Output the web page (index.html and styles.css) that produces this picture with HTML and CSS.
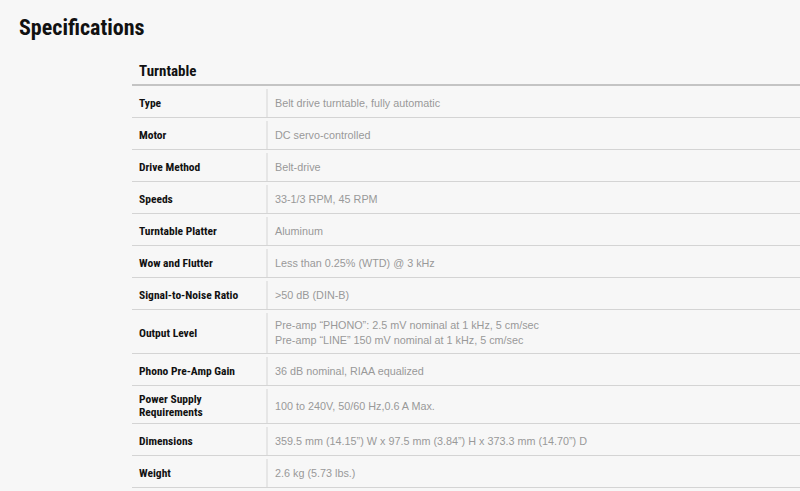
FILE: index.html
```html
<!DOCTYPE html>
<html lang="en">
<head>
    <meta charset="UTF-8">
    <meta name="viewport" content="width=device-width, initial-scale=1.0">
    <title>Specifications</title>
    <link rel="stylesheet" href="styles.css">
</head>
<body>
    <h1 class="page-title">Specifications</h1>

    <section class="spec-group">
        <h2 class="group-title">Turntable</h2>

        <div class="spec-row">
            <div class="spec-label">Type</div>
            <div class="spec-value">Belt drive turntable, fully automatic</div>
        </div>
        <div class="spec-row">
            <div class="spec-label">Motor</div>
            <div class="spec-value">DC servo-controlled</div>
        </div>
        <div class="spec-row">
            <div class="spec-label">Drive Method</div>
            <div class="spec-value">Belt-drive</div>
        </div>
        <div class="spec-row">
            <div class="spec-label">Speeds</div>
            <div class="spec-value">33-1/3 RPM, 45 RPM</div>
        </div>
        <div class="spec-row">
            <div class="spec-label">Turntable Platter</div>
            <div class="spec-value">Aluminum</div>
        </div>
        <div class="spec-row">
            <div class="spec-label">Wow and Flutter</div>
            <div class="spec-value">Less than 0.25% (WTD) @ 3 kHz</div>
        </div>
        <div class="spec-row">
            <div class="spec-label">Signal-to-Noise Ratio</div>
            <div class="spec-value">&gt;50 dB (DIN-B)</div>
        </div>
        <div class="spec-row">
            <div class="spec-label">Output Level</div>
            <div class="spec-value">Pre-amp “PHONO”: 2.5 mV nominal at 1 kHz, 5 cm/sec<br>Pre-amp “LINE” 150 mV nominal at 1 kHz, 5 cm/sec</div>
        </div>
        <div class="spec-row">
            <div class="spec-label">Phono Pre-Amp Gain</div>
            <div class="spec-value">36 dB nominal, RIAA equalized</div>
        </div>
        <div class="spec-row">
            <div class="spec-label">Power Supply<br>Requirements</div>
            <div class="spec-value">100 to 240V, 50/60 Hz,0.6 A Max.</div>
        </div>
        <div class="spec-row">
            <div class="spec-label">Dimensions</div>
            <div class="spec-value">359.5 mm (14.15”) W x 97.5 mm (3.84”) H x 373.3 mm (14.70”) D</div>
        </div>
        <div class="spec-row">
            <div class="spec-label">Weight</div>
            <div class="spec-value">2.6 kg (5.73 lbs.)</div>
        </div>
    </section>
</body>
</html>
```

FILE: styles.css
```css
body {
    margin: 0;
    padding: 15px 0 0 19px;
    background: #f7f7f7;
    color: #111;
    font-family: "Liberation Sans Narrow", "Roboto Condensed", "Liberation Sans", Arial, sans-serif;
}

.page-title {
    margin: 0;
    font-size: 22px;
    font-weight: bold;
    line-height: 26px;
}

.spec-group {
    margin: 20px 0 0 113px;
}

.group-title {
    margin: 0;
    padding: 0 0 3px 7px;
    font-size: 15px;
    font-weight: bold;
    line-height: 20px;
    border-bottom: 2px solid #c4c4c4;
}

/* Rows */
.spec-row {
    display: grid;
    grid-template-columns: 134px 1fr;
    min-height: 32px;
    box-sizing: border-box;
    padding-top: 3px;
    border-bottom: 1px solid #d4d4d4;
}

.spec-label {
    padding: 4px 7px;
    font-size: 11.5px;
    font-weight: bold;
    line-height: 13px;
    display: flex;
    align-items: center;
}

.spec-value {
    padding: 5px 8px 5px 7px;
    border-left: 2px solid #e6e6e6;
    font-family: "Liberation Sans", Arial, sans-serif;
    font-size: 10.8px;
    line-height: 15px;
    color: #999;
    display: flex;
    align-items: center;
    white-space: nowrap;
}
```
